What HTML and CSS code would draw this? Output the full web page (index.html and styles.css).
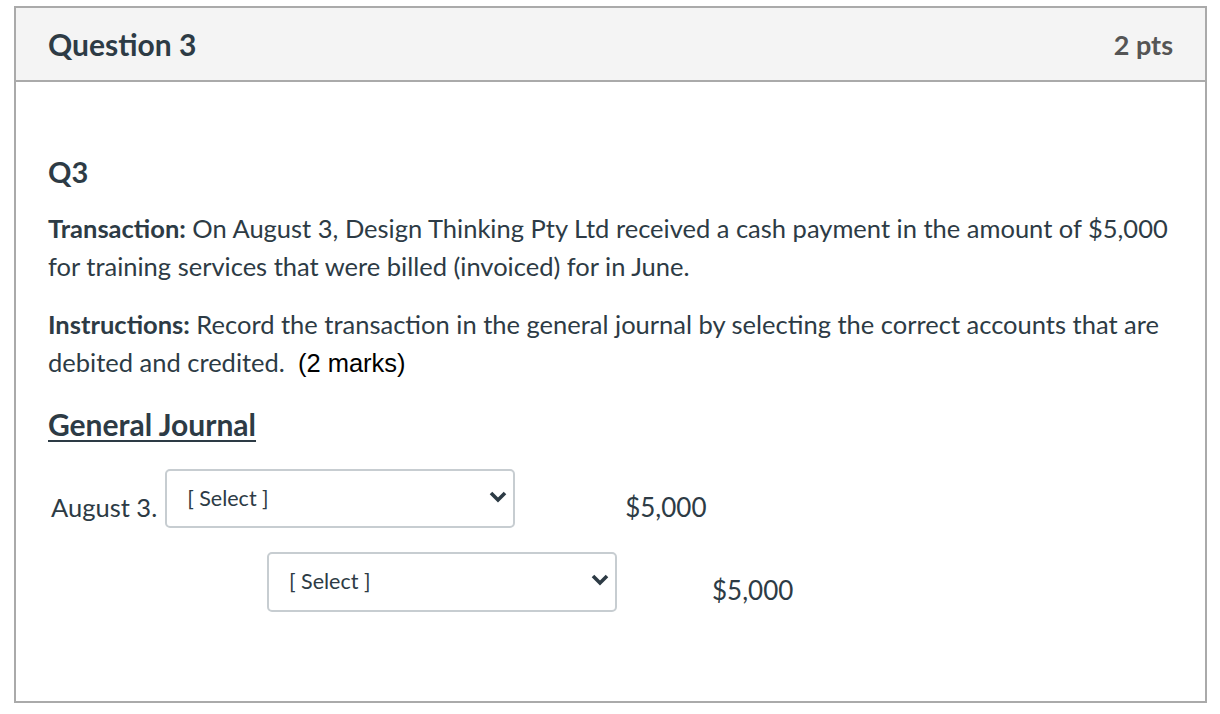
FILE: index.html
```html
<!DOCTYPE html>
<html>
<head>
<meta charset="utf-8">
<link rel="stylesheet" href="styles.css">
</head>
<body>
<div class="question">
  <div class="q-header">
    <div class="q-title">Question 3</div>
    <div class="q-pts">2 pts</div>
  </div>
  <div class="q-body">
    <h3 class="q-sub">Q3</h3>
    <p class="para"><strong>Transaction:</strong> On August 3, Design Thinking Pty Ltd received a cash payment in the amount of $5,000 for training services that were billed (invoiced) for in June.</p>
    <p class="para para2"><strong>Instructions:</strong> Record the transaction in the general journal by selecting the correct accounts that are debited and credited.&nbsp; <span class="arial">(2 marks)</span></p>
    <h3 class="gj">General Journal</h3>
    <div class="row row1">
      <span class="date">August 3.</span>
      <div class="select"><span class="sel-text">[ Select ]</span><svg class="chev" viewBox="0 0 18 12" width="18" height="12"><path d="M2 2 L9 9 L16 2" fill="none" stroke="#2d3b45" stroke-width="3.6" stroke-linejoin="miter"/></svg></div>
      <span class="amt amt1">$5,000</span>
    </div>
    <div class="row row2">
      <div class="select select2"><span class="sel-text">[ Select ]</span><svg class="chev" viewBox="0 0 18 12" width="18" height="12"><path d="M2 2 L9 9 L16 2" fill="none" stroke="#2d3b45" stroke-width="3.6" stroke-linejoin="miter"/></svg></div>
      <span class="amt amt2">$5,000</span>
    </div>
  </div>
</div>
</body>
</html>
```
FILE: styles.css
```css
html, body { margin: 0; padding: 0; background: #fff; }
body { padding: 6px 12px 0 14px; font-family: Lato, "Liberation Sans", sans-serif; color: #2d3b45; }
.question { width: 1189px; height: 693px; border: 2px solid #aaaaaa; box-sizing: content-box; display: flex; flex-direction: column; }
.q-header { height: 72px; background: #f4f4f4; border-bottom: 2px solid #aaaaaa; display: flex; align-items: center; justify-content: space-between; padding: 0 32px 0 32px; flex-shrink: 0; }
.q-title { font-size: 30px; font-weight: 700; color: #2d3b45; }
.q-pts { font-size: 27px; font-weight: 700; color: #555; }
.q-body { padding: 0 20px 0 32px; }
.q-sub { font-size: 29px; font-weight: 700; margin: 74px 0 0 0; line-height: 32px; }
.para { font-size: 25.5px; line-height: 38px; margin: 21px 0 0 0; }
.para2 { margin-top: 20px; }
.arial { font-family: "Liberation Sans", Arial, sans-serif; color: #000; font-size: 25.5px; }
.gj { font-size: 30px; font-weight: 700; text-decoration: underline; text-decoration-thickness: 2px; text-underline-offset: 4px; margin: 24px 0 0 0; line-height: 36px; }
.row { display: flex; align-items: center; }
.row1 { margin-top: 27px; padding-left: 3px; }
.row2 { margin-top: 24px; padding-left: 219px; }
.date { font-size: 25.5px; margin-right: 8px; margin-top: 16px; }
.select { width: 350px; height: 59px; box-sizing: border-box; border: 2px solid #c7cdd1; border-radius: 5px; display: flex; align-items: center; justify-content: space-between; padding: 0 6px 2px 20px; }
.select2 { height: 60px; }
.sel-text { font-size: 21.5px; line-height: 28px; }
.chev { margin-top: -2px; }
.amt { font-size: 26px; margin-top: 16px; }
.amt1 { margin-left: 110px; }
.amt2 { margin-left: 95px; }
```
